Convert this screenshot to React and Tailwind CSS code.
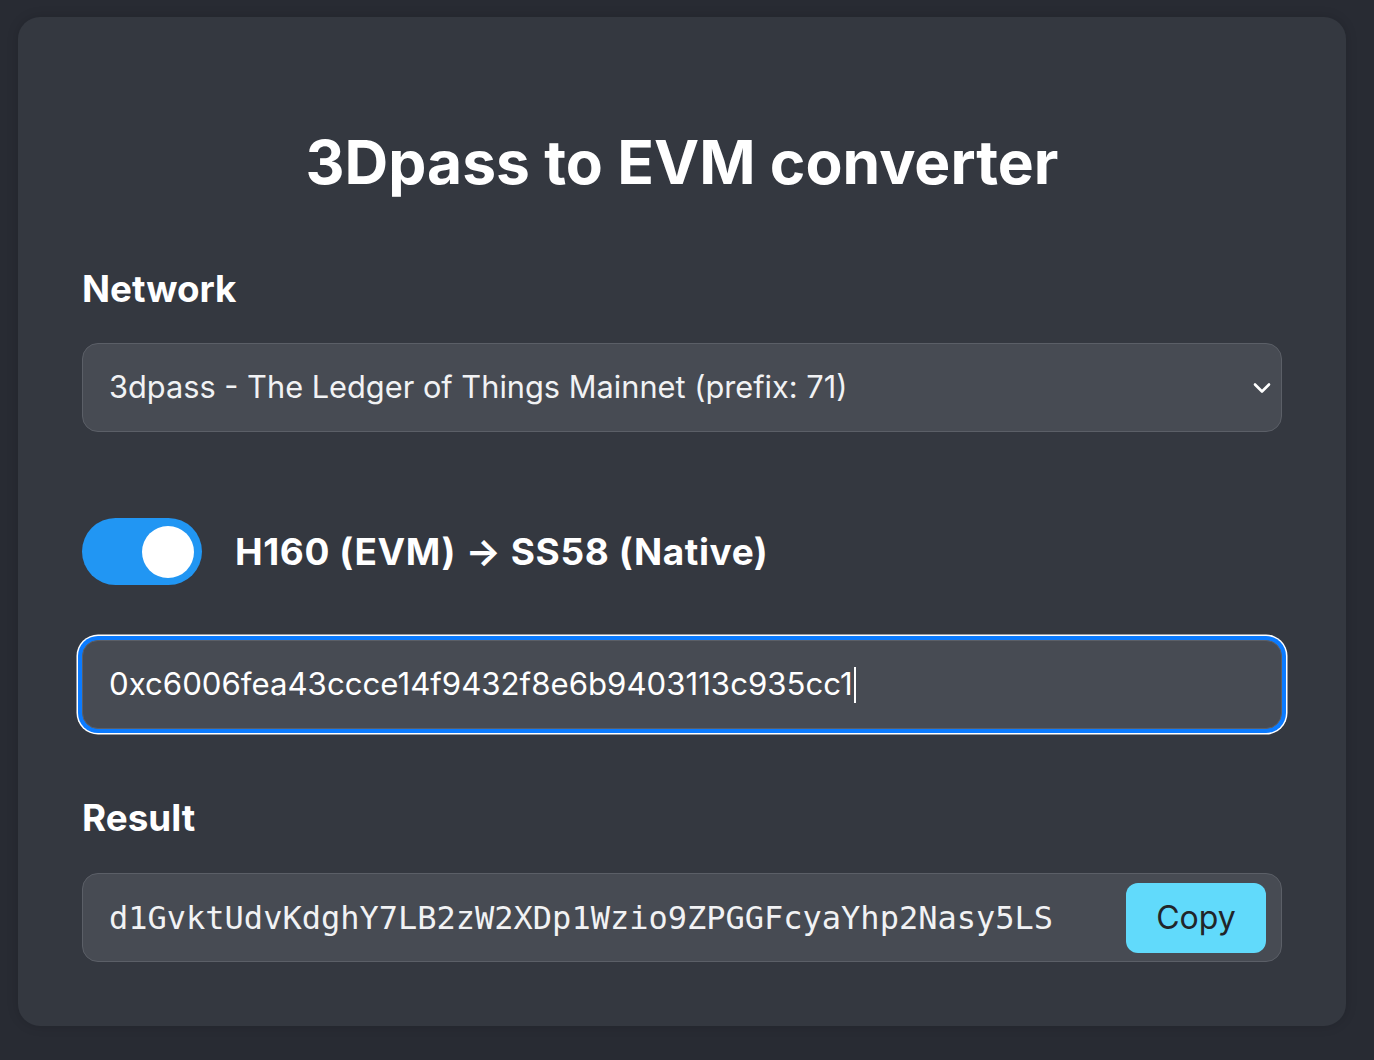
import React from 'react'

const sans = { fontFamily: 'Inter, "Noto Sans", sans-serif' }

export default function App() {
  return (
    <div className="min-h-[1060px] bg-[#282b33] pt-[17px] pl-[18px]" style={sans}>
      <div className="w-[1328px] rounded-[22px] bg-[#343840] px-[64px] pt-[109px] pb-[64px] shadow-[0_0_12px_rgba(0,0,0,0.15)]">
        <h1 className="text-center text-[60.5px] leading-[72px] font-bold text-white">
          3Dpass to EVM converter
        </h1>

        <div className="mt-[69px] text-[36.8px] leading-[44px] font-bold text-white">Network</div>

        <div className="mt-[32px] flex h-[89px] items-center justify-between rounded-[16px] border border-[#5b5f67] bg-[#474b53] pl-[26px] pr-[8px]">
          <span className="text-[30.75px] text-[#f1f2f4]">3dpass - The Ledger of Things Mainnet (prefix: 71)</span>
          <svg width="18" height="12" viewBox="0 0 18 12" fill="none" className="mr-[2px]">
            <path d="M2 2.5 L9 9.5 L16 2.5" stroke="#ffffff" strokeWidth="2.6" strokeLinecap="round" strokeLinejoin="round" />
          </svg>
        </div>

        <div className="mt-[86px] flex items-center gap-[33px]">
          <div className="flex h-[67px] w-[120px] items-center justify-end rounded-full bg-[#2196f3] pr-[8px]">
            <div className="h-[52px] w-[52px] rounded-full bg-white" />
          </div>
          <span className="text-[37px] leading-[44px] font-bold text-white tracking-[0.6px]">H160 (EVM) → SS58 (Native)</span>
        </div>

        <div className="mt-[55px] flex h-[89px] items-center rounded-[16px] border border-[#5b5f67] bg-[#474b53] pl-[26px] shadow-[0_0_0_4px_#0b7bff,0_0_0_5.5px_#ffffff]">
          <span className="text-[31.2px] text-white">0xc6006fea43ccce14f9432f8e6b9403113c935cc1</span>
          <span className="ml-[1px] inline-block h-[36px] w-[2px] bg-white" />
        </div>

        <div className="mt-[67px] text-[36.8px] leading-[44px] font-bold text-white">Result</div>

        <div className="mt-[33px] flex h-[89px] items-center justify-between rounded-[16px] border border-[#5b5f67] bg-[#474b53] pl-[26px] pr-[15px]">
          <span className="text-[32px] text-[#f1f2f4]" style={{ fontFamily: '"DejaVu Sans Mono", "Liberation Mono", monospace' }}>
            d1GvktUdvKdghY7LB2zW2XDp1Wzio9ZPGGFcyaYhp2Nasy5LS
          </span>
          <button className="flex h-[70px] w-[140px] items-center justify-center rounded-[12px] bg-[#61dafb] text-[32px] text-[#212529]">
            Copy
          </button>
        </div>
      </div>
    </div>
  )
}
